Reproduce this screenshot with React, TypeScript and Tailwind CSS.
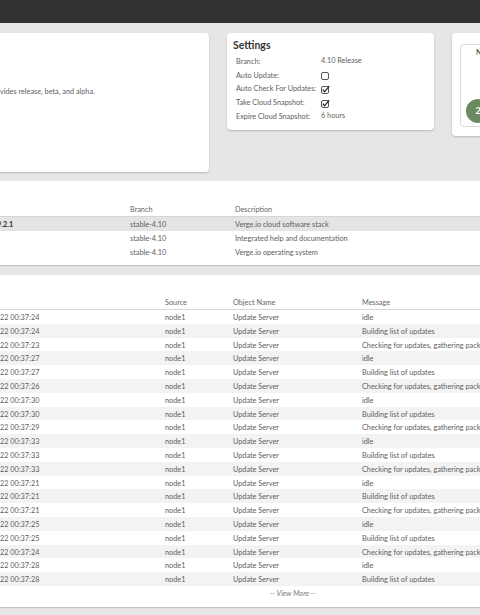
import React from 'react';

const packages = [
  { name: '9.2.1', branch: 'stable-4.10', description: 'Verge.io cloud software stack', selected: true },
  { name: '', branch: 'stable-4.10', description: 'Integrated help and documentation', selected: false },
  { name: '', branch: 'stable-4.10', description: 'Verge.io operating system', selected: false },
];

const times = [
  '24', '24', '23', '27', '27', '26', '30', '30', '29', '33',
  '33', '33', '21', '21', '21', '25', '25', '24', '28', '28',
];

const messages = ['idle', 'Building list of updates', 'Checking for updates, gathering packages'];

const logs = times.map((t, i) => ({
  id: i,
  time: `22 00:37:${t}`,
  source: 'node1',
  object: 'Update Server',
  message: messages[i % 3],
}));

const Checkbox = ({ checked }: { checked: boolean }) => (
  <svg width="10" height="9" viewBox="0 0 10 9" className="block">
    <rect x="0.5" y="1.5" width="7" height="7" rx="1.5" fill="white" stroke="#444" strokeWidth="0.9" />
    {checked && <path d="M1.8 4.6 L3.6 6.8 L8.2 1.2" fill="none" stroke="#222" strokeWidth="1.2" />}
  </svg>
);

const settings: Array<{ label: string; value: React.ReactNode }> = [
  { label: 'Branch:', value: '4.10 Release' },
  { label: 'Auto Update:', value: <Checkbox checked={false} /> },
  { label: 'Auto Check For Updates:', value: <Checkbox checked /> },
  { label: 'Take Cloud Snapshot:', value: <Checkbox checked /> },
  { label: 'Expire Cloud Snapshot:', value: '6 hours' },
];

export default function App() {
  return (
    <div className="w-[480px] h-[615px] overflow-hidden bg-[#e6e6e6] text-[#5e5e5e] font-['Lato',sans-serif]">
      {/* Top bar */}
      <div className="h-[23px] bg-[#323232]" />

      {/* Cards */}
      <div className="flex items-start gap-[18px] -ml-[8px] pt-[10px]">
        <div className="w-[217px] shrink-0 h-[139px] bg-white rounded shadow-[0_1px_2px_rgba(0,0,0,0.2)] pl-[8px] pt-[54px]">
          <p className="text-[7.3px] leading-[10px] whitespace-nowrap">vides release, beta, and alpha.</p>
        </div>

        <div className="w-[207px] shrink-0 h-[97px] bg-white rounded shadow-[0_1px_2px_rgba(0,0,0,0.2)] px-[6px] pt-[5px]">
          <h3 className="text-[10.5px] font-bold text-[#333] leading-[14px] mb-[2px]">Settings</h3>
          <div className="pl-[3px]">
            {settings.map((s) => (
              <div key={s.label} className="flex items-center h-[13.75px] pt-[3px] text-[7.3px]">
                <span className="w-[85px] shrink-0 whitespace-nowrap">{s.label}</span>
                <span className="whitespace-nowrap -mt-[1px]">{s.value}</span>
              </div>
            ))}
          </div>
        </div>

        <div className="w-[80px] shrink-0 h-[103px] bg-white rounded shadow-[0_1px_2px_rgba(0,0,0,0.2)] pl-[8px] pt-[11px]">
          <div className="h-[83px] border border-[#dcdcdc] rounded-sm flex flex-col items-start pl-[15px]">
            <span className="text-[7.5px] text-[#333] leading-[14px] pt-[1px]">N</span>
            <div className="mt-auto mb-[3px] -ml-[10px] w-[24px] h-[24px] rounded-full bg-[#6c8a5f] flex items-center justify-center text-white text-[9px] font-bold">
              2
            </div>
          </div>
        </div>
      </div>

      {/* Packages panel */}
      <div className="mt-[9px] -ml-[8px] w-[500px] h-[84px] bg-white shadow-[0_1px_1px_rgba(0,0,0,0.15)] pt-[21px] pl-[8px] text-[7.3px]">
        <div className="grid grid-cols-[130px_105px_1fr] h-[15px] pt-[3px] items-center border-b border-[#d6d6d6] text-[#666]">
          <span />
          <span>Branch</span>
          <span>Description</span>
        </div>
        {packages.map((p) => (
          <div
            key={p.description}
            className={`grid grid-cols-[130px_105px_1fr] h-[13.75px] pt-[3px] items-center -ml-[8px] pl-[8px] ${
              p.selected ? 'bg-[#e4e4e4]' : ''
            }`}
          >
            <span className="font-bold text-[#333] -ml-[3px] whitespace-nowrap">{p.name}</span>
            <span>{p.branch}</span>
            <span>{p.description}</span>
          </div>
        ))}
      </div>

      {/* Logs panel */}
      <div className="mt-[10px] -ml-[8px] w-[500px] h-[332px] bg-white shadow-[0_1px_1px_rgba(0,0,0,0.15)] pt-[20px] text-[7.3px]">
        <div className="grid grid-cols-[165px_68px_129px_1fr] h-[15px] pt-[3px] items-center border-b border-[#d6d6d6] text-[#666] pl-[8px]">
          <span />
          <span>Source</span>
          <span>Object Name</span>
          <span>Message</span>
        </div>
        {logs.map((l) => (
          <div
            key={l.id}
            className={`grid grid-cols-[165px_68px_129px_1fr] h-[13.8px] pt-[3px] items-center pl-[8px] whitespace-nowrap ${
              l.id % 2 === 1 ? 'bg-[#f3f3f3]' : ''
            }`}
          >
            <span>{l.time}</span>
            <span>{l.source}</span>
            <span>{l.object}</span>
            <span>{l.message}</span>
          </div>
        ))}
        <div className="h-[14px] pt-[3px] flex items-center pl-[278px] italic text-[#777]">-- View More --</div>
      </div>
    </div>
  );
}
